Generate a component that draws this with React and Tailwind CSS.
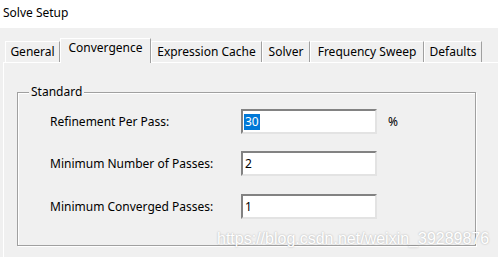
import React from "react";

const tabs = [
  { label: "General", w: "w-[55px]" },
  { label: "Convergence", w: "w-[91px]", active: true },
  { label: "Expression Cache", w: "w-[111px]" },
  { label: "Solver", w: "w-[48px]" },
  { label: "Frequency Sweep", w: "w-[114px]" },
  { label: "Defaults", w: "w-[58px]" },
];

function Field({ value, selected }) {
  return (
    <div className="w-[136px] h-[25px] bg-white border-2 border-t-[#828282] border-l-[#828282] border-b-[#e3e3e3] border-r-[#e3e3e3] flex items-center pl-[1px]">
      {selected ? (
        <span className="bg-[#0078d7] text-white leading-[16px] h-[16px] px-[1px]">{value}</span>
      ) : (
        <span className="text-black leading-[16px] px-[1px]">{value}</span>
      )}
    </div>
  );
}

export default function App() {
  return (
    <div
      className="w-[498px] h-[257px] bg-[#f0f0f0] overflow-hidden relative text-[12px] text-black"
      style={{ fontFamily: '"Noto Sans", "Noto Sans CJK SC", sans-serif' }}
    >
      <div className="h-[28px] bg-white pl-[3px] flex items-center">
        <span className="leading-none pb-[2px]">Solve Setup</span>
      </div>

      <div className="pl-[5px] pt-[9px] flex items-end h-[34px]">
        {tabs.map((t) =>
          t.active ? (
            <div
              key={t.label}
              className={`${t.w} h-[25px] -mb-[1px] bg-[#f0f0f0] border-l border-t border-white border-r border-r-[#a0a0a0] flex justify-center pt-[1px] relative z-10 whitespace-nowrap`}
            >
              <span className="leading-[16px]">{t.label}</span>
            </div>
          ) : (
            <div
              key={t.label}
              className={`${t.w} h-[21px] bg-[#f0f0f0] border-l border-t border-white border-r border-r-[#a0a0a0] flex justify-center pt-[2px] whitespace-nowrap`}
            >
              <span className="leading-[16px]">{t.label}</span>
            </div>
          )
        )}
      </div>

      <div className="ml-[3px] border-t border-l border-white h-[200px] pt-[29px] pl-[13px]">
        <div className="relative w-[459px] h-[154px] border border-[#a0a0a0] shadow-[1px_1px_0_#ffffff,inset_1px_1px_0_#ffffff] pt-[16px]">
          <span className="absolute left-[11px] -top-[9px] px-[2px] bg-[#f0f0f0] leading-[16px]">Standard</span>
          <div className="flex flex-col gap-[17px] pl-[32px]">
            <div className="flex items-center h-[25px]">
              <span className="w-[191px]">Refinement Per Pass:</span>
              <Field value="30" selected />
              <span className="ml-[11px]">%</span>
            </div>
            <div className="flex items-center h-[25px]">
              <span className="w-[191px]">Minimum Number of Passes:</span>
              <Field value="2" />
            </div>
            <div className="flex items-center h-[25px] mt-[1px]">
              <span className="w-[191px]">Minimum Converged Passes:</span>
              <Field value="1" />
            </div>
          </div>
        </div>
      </div>

      <div
        className="absolute left-[217px] top-[229px] text-[16px] leading-[20px] text-white [text-shadow:0_0_2px_rgba(0,0,0,0.3)]"
        style={{ fontFamily: '"Liberation Sans", Arial, sans-serif' }}
      >
        https://blog.csdn.net/weixin_39289876
      </div>
    </div>
  );
}
